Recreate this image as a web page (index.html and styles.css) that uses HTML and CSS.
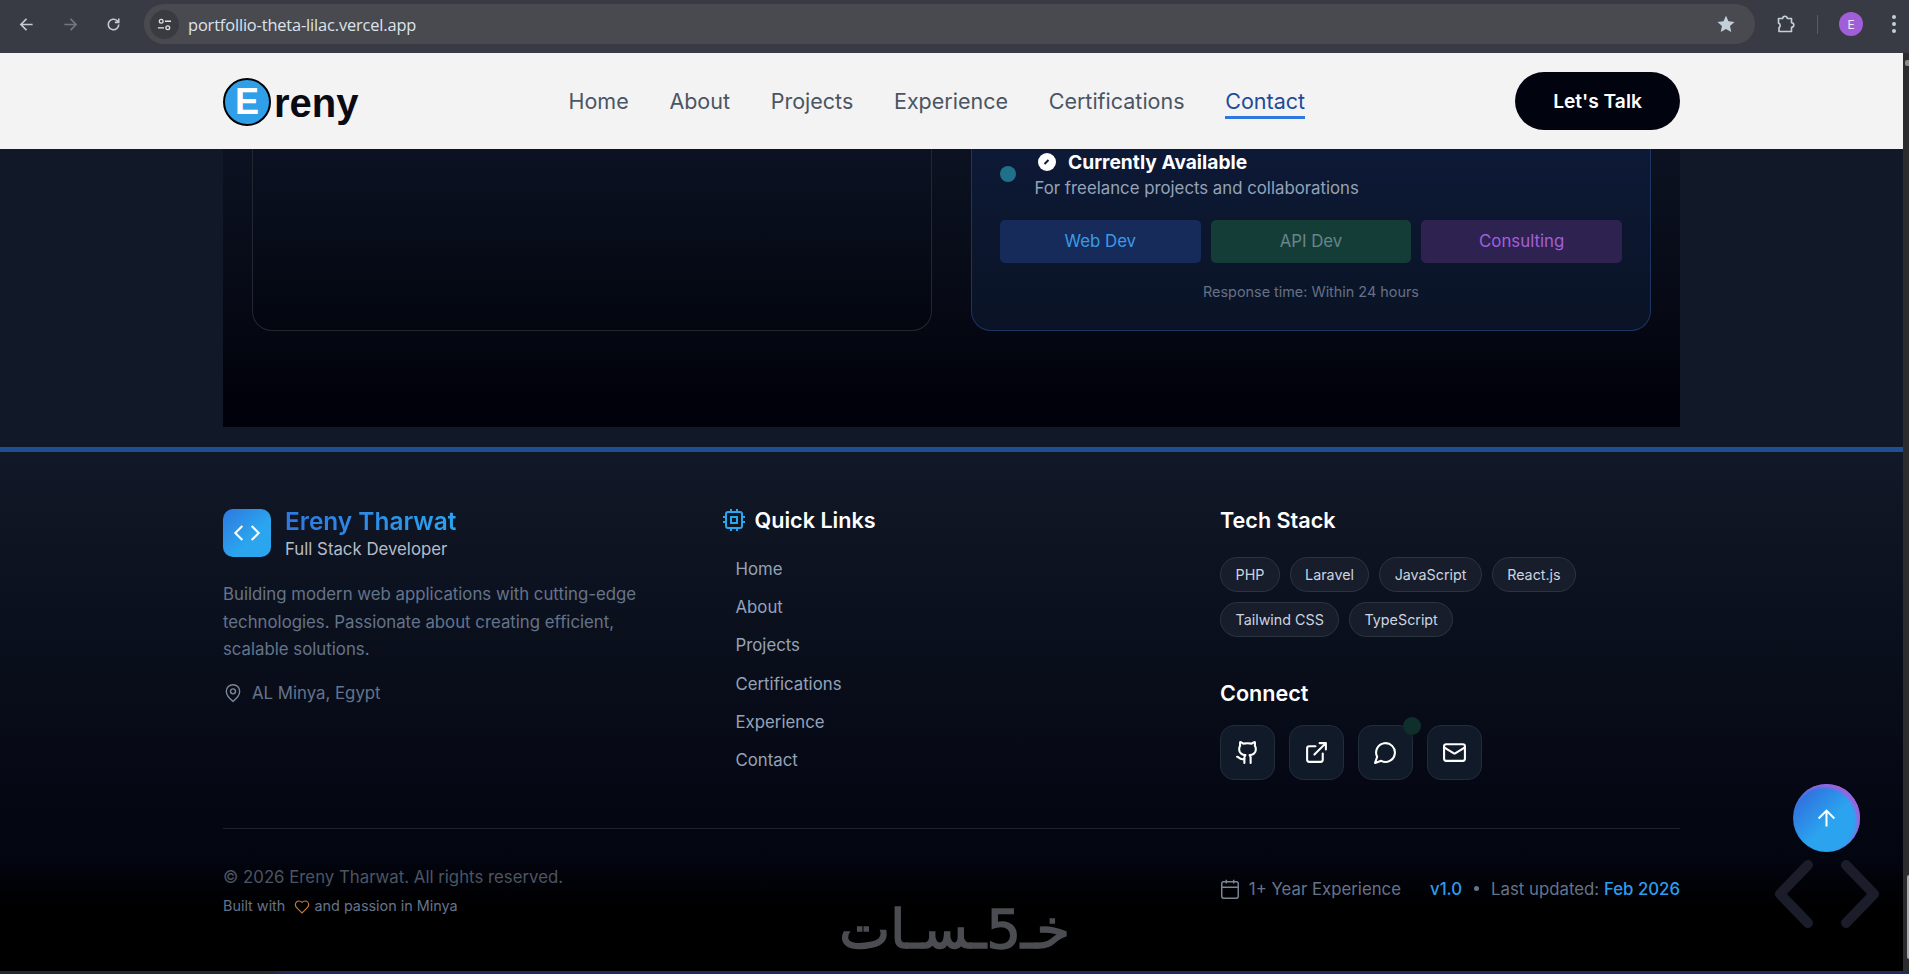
FILE: index.html
```html
<!DOCTYPE html>
<html lang="en">
<head>
<meta charset="utf-8">
<title>Ereny Tharwat</title>
<link rel="stylesheet" href="styles.css">
</head>
<body>
<div class="toolbar">
  <div class="tb-nav">
    <svg class="tb-ico" viewBox="0 0 16 16"><path d="M14.5 8H2M8 2 2 8l6 6"/></svg>
    <svg class="tb-ico dim" viewBox="0 0 16 16"><path d="M1.5 8H14M8 2l6 6-6 6"/></svg>
    <svg class="tb-ico" viewBox="0 0 16 16"><path d="M13.6 8a5.6 5.6 0 1 1-1.7-4L13.6 5.7M13.6 1.6v4.1H9.5"/></svg>
  </div>
  <div class="omnibox">
    <span class="tune"><svg viewBox="0 0 16 16"><circle cx="4.5" cy="4.5" r="2"/><path d="M8.5 4.5H15M1 11.5h6.5"/><circle cx="11.5" cy="11.5" r="2"/></svg></span>
    <span class="url">portfollio-theta-lilac.vercel.app</span>
    <svg class="star" viewBox="0 0 24 24"><path d="m12 2.2 3 6.6 7.2.8-5.4 4.8 1.5 7.1-6.3-3.6-6.3 3.6 1.5-7.1L1.8 9.6 9 8.8z"/></svg>
  </div>
  <div class="tb-right">
    <svg class="ext" viewBox="0 0 20 20"><path d="M2.5 4.5h4.2a2.3 2.3 0 0 1 4.6 0h4.2v4.2a2.3 2.3 0 0 1 0 4.6v4.2H3v-3.8a2.6 2.6 0 0 0 1.2-2.2c0-1-.6-1.9-1.7-2.4z"/></svg>
    <span class="sep"></span>
    <span class="avatar">E</span>
    <span class="dots"><i></i><i></i><i></i></span>
  </div>
</div>

<div class="viewport">
  <div class="main">
    <header class="header">
      <div class="wrap header-in">
        <a class="logo"><span class="logo-e">E</span><span class="logo-t">reny</span></a>
        <nav class="nav">
          <a>Home</a><a>About</a><a>Projects</a><a>Experience</a><a>Certifications</a><a class="active">Contact</a>
        </nav>
        <a class="talk">Let's Talk</a>
      </div>
    </header>

    <section class="wrap contact">
      <div class="card card-l"></div>
      <div class="card card-r">
        <div class="avail">
          <span class="pulse"></span>
          <div class="avail-text">
            <div class="avail-h">
              <svg class="check" viewBox="0 0 20 20"><circle cx="10" cy="10" r="9" class="check-bg"/><path d="m7.5 12 4-4" class="check-m"/></svg>
              <strong>Currently Available</strong>
            </div>
            <p>For freelance projects and collaborations</p>
          </div>
        </div>
        <div class="tags">
          <span class="tag t-blue">Web Dev</span>
          <span class="tag t-green">API Dev</span>
          <span class="tag t-purple">Consulting</span>
        </div>
        <p class="resp">Response time: Within 24 hours</p>
      </div>
    </section>

    <footer class="footer">
      <div class="wrap">
        <div class="f-grid">
          <div>
            <div class="brand">
              <span class="brand-ico"><svg viewBox="0 0 24 24"><path d="m8 6-6 6 6 6M16 6l6 6-6 6"/></svg></span>
              <div>
                <div class="brand-name">Ereny Tharwat</div>
                <div class="brand-sub">Full Stack Developer</div>
              </div>
            </div>
            <p class="about">Building modern web applications with cutting-edge technologies. Passionate about creating efficient, scalable solutions.</p>
            <div class="loc">
              <svg viewBox="0 0 24 24"><path d="M20 10c0 6-8 12-8 12s-8-6-8-12a8 8 0 0 1 16 0Z"/><circle cx="12" cy="10" r="3"/></svg>
              <span>AL Minya, Egypt</span>
            </div>
          </div>
          <div>
            <h3 class="f-h with-ico">
              <svg viewBox="0 0 24 24"><rect x="4" y="4" width="16" height="16" rx="2"/><rect x="9" y="9" width="6" height="6"/><path d="M9 1v3M15 1v3M9 20v3M15 20v3M20 9h3M20 14h3M1 9h3M1 14h3"/></svg>
              Quick Links
            </h3>
            <ul class="links">
              <li>Home</li><li>About</li><li>Projects</li><li>Certifications</li><li>Experience</li><li>Contact</li>
            </ul>
          </div>
          <div>
            <h3 class="f-h">Tech Stack</h3>
            <div class="pills">
              <span>PHP</span><span>Laravel</span><span>JavaScript</span><span>React.js</span><span>Tailwind CSS</span><span>TypeScript</span>
            </div>
            <h3 class="f-h connect">Connect</h3>
            <div class="socials">
              <a><svg viewBox="0 0 24 24"><path d="M15 22v-4a4.8 4.8 0 0 0-1-3.5c3 0 6-2 6-5.5.08-1.25-.27-2.48-1-3.5.28-1.15.28-2.35 0-3.5 0 0-1 0-3 1.5-2.64-.5-5.36-.5-8 0C6 2 5 2 5 2c-.3 1.15-.3 2.35 0 3.5A5.403 5.403 0 0 0 4 9c0 3.5 3 5.5 6 5.5-.39.49-.68 1.05-.85 1.65-.17.6-.22 1.23-.15 1.85v4"/><path d="M9 18c-4.51 2-5-2-7-2"/></svg></a>
              <a><svg viewBox="0 0 24 24"><path d="M18 13v6a2 2 0 0 1-2 2H5a2 2 0 0 1-2-2V8a2 2 0 0 1 2-2h6M15 3h6v6M10 14 21 3"/></svg></a>
              <a class="has-dot"><svg viewBox="0 0 24 24"><path d="M7.9 20A9 9 0 1 0 4 16.1L2 22Z"/></svg><span class="online"></span></a>
              <a><svg viewBox="0 0 24 24"><rect x="2" y="4" width="20" height="16" rx="2"/><path d="m22 7-8.97 5.7a1.94 1.94 0 0 1-2.06 0L2 7"/></svg></a>
            </div>
          </div>
        </div>
        <div class="f-bottom">
          <div>
            <p class="copy">© 2026 Ereny Tharwat. All rights reserved.</p>
            <p class="built">Built with <svg class="heart" viewBox="0 0 24 24"><path d="M19 14c1.49-1.46 3-3.21 3-5.5A5.5 5.5 0 0 0 16.5 3c-1.76 0-3 .5-4.5 2-1.5-1.5-2.74-2-4.5-2A5.5 5.5 0 0 0 2 8.5c0 2.3 1.5 4.05 3 5.5l7 7Z"/></svg> and passion in Minya</p>
          </div>
          <div class="meta">
            <svg viewBox="0 0 24 24"><path d="M8 2v4M16 2v4M3 10h18"/><rect x="3" y="4" width="18" height="18" rx="2"/></svg>
            <span class="exp">1+ Year Experience</span>
            <span class="ver">v1.0</span>
            <span class="bullet"></span>
            <span>Last updated: <b>Feb 2026</b></span>
          </div>
        </div>
      </div>
    </footer>
  </div>
  <div class="scrollbar"><span class="sb-arrow"></span><span class="sb-thumb"></span></div>

  <div class="watermark" dir="rtl" lang="ar">خـ5ـسـات</div>
  <svg class="code-mark" viewBox="0 0 104 68"><path d="M33 5 5 34l28 29M71 5l28 29-28 29"/></svg>
  <a class="to-top"><svg viewBox="0 0 24 24"><path d="M12 19V5M5 12l7-7 7 7"/></svg></a>
</div>
<div class="taskbar"></div>
</body>
</html>
```

FILE: styles.css
```css
* { box-sizing: border-box; }
html, body { margin: 0; padding: 0; }
body {
  width: 1909px;
  height: 974px;
  overflow: hidden;
  background: #111827;
  font-family: Inter, "Noto Sans", sans-serif;
  color: #fff;
}
p, h3, ul { margin: 0; padding: 0; }
ul { list-style: none; }

/* browser chrome */
.toolbar {
  height: 53px;
  background: #393b44;
  display: flex;
  align-items: center;
  padding: 0 0 5px 19px;
}
.tb-nav { display: flex; gap: 28.5px; width: 125px; }
.tb-ico { width: 15px; height: 15px; fill: none; stroke: #c4ccd3; stroke-width: 1.7; overflow: visible; flex: none; }
.tb-ico.dim { stroke: #717780; }
.omnibox {
  width: 1611px;
  height: 40px;
  border-radius: 20px;
  background: #494a50;
  display: flex;
  align-items: center;
  padding: 0 19px 0 6px;
}
.tune {
  width: 29px; height: 29px; border-radius: 50%;
  background: #393b41;
  display: flex; align-items: center; justify-content: center;
  flex: none;
}
.tune svg { width: 15px; height: 15px; fill: none; stroke: #dfe3e7; stroke-width: 1.4; }
.url { margin-left: 9px; font-family: "Open Sans", sans-serif; font-size: 16.4px; color: #dde3ea; flex: 1; letter-spacing: -0.15px; }
.star { width: 20px; height: 20px; fill: #c3d0da; }
.tb-right { display: flex; align-items: center; flex: 1; padding-left: 21px; }
.ext { width: 20px; height: 20px; fill: none; stroke: #c3d0da; stroke-width: 1.6; stroke-linejoin: round; }
.sep { width: 1px; height: 19px; background: #5a5c63; margin-left: 21px; }
.avatar {
  width: 24px; height: 24px; border-radius: 50%;
  background: #a05fd9; color: #f3e9fa;
  font-size: 12px; display: flex; align-items: center; justify-content: center;
  margin-left: 21px;
}
.dots { display: flex; flex-direction: column; gap: 3px; margin-left: 29px; }
.dots i { width: 4px; height: 4px; border-radius: 50%; background: #c3d0da; display: block; }

/* page */
.viewport { position: relative; display: flex; height: 918px; overflow: hidden; }
.main { width: 1903px; flex: none; }
.scrollbar { position: relative; flex: 1; background: #2c2c2f; }
.sb-arrow { position: absolute; top: 7px; left: 2px; width: 4px; height: 6px; background: #8a8a8d; border-radius: 2px 0 0 2px; }
.sb-thumb { position: absolute; top: 822px; left: 4px; width: 2px; height: 84px; background: #a8a8aa; border-radius: 2px 0 0 2px; }
.taskbar { height: 3px; background: linear-gradient(90deg, #232730 0, #232730 14%, #1c2d5c 15%, #1c2d5c 100%); }
.wrap { width: 1457px; margin: 0 auto; }

.header { height: 96px; background: #f3f3f3; }
.header-in { height: 100%; display: flex; align-items: center; justify-content: space-between; }
.logo { display: flex; align-items: center; color: #0a0a14; font-family: "Liberation Sans", sans-serif; font-weight: 700; margin-top: 1px; }
.logo-e {
  width: 48px; height: 48px; border-radius: 50%;
  border: 2px solid #000; background: #2e9fe8; color: #fff;
  display: flex; align-items: center; justify-content: center;
  font-size: 36px; line-height: 1;
}
.logo-t { font-size: 40px; line-height: 48px; margin-left: 3px; margin-top: 2px; }
.nav { display: flex; gap: 40.7px; font-size: 21.5px; color: #4b5563; }
.nav a { padding-bottom: 2px; border-bottom: 3px solid transparent; margin-top: 5px; line-height: 26px; }
.nav .active { color: #1e4a9c; border-bottom-color: #2f78e0; }
.talk {
  width: 165px; height: 58px; border-radius: 29px;
  background: #01030f; color: #fff;
  font-weight: 600; font-size: 19.2px;
  display: flex; align-items: center; justify-content: center;
}

.contact {
  display: grid;
  grid-template-columns: 680px 680px;
  column-gap: 39px;
  padding: 0 29px 96px;
  height: 278px;
  background: linear-gradient(180deg, #0c1222 0%, #060914 60%, #00010a 90%);
}
.card { border-radius: 0 0 20px 20px; }
.card-l { border: 1px solid #23272f; border-top: 0; background: linear-gradient(180deg, #0c1223, #03060f); }
.card-r {
  border: 1px solid #1c3563; border-top: 0;
  background: linear-gradient(180deg, #0d1936, #0a1325);
  padding: 0 28px;
}
.avail { display: flex; align-items: center; gap: 19px; height: 52px; }
.pulse { width: 16px; height: 16px; border-radius: 50%; background: #1f7088; flex: none; margin-top: -2px; }
.avail-h { display: flex; align-items: center; gap: 11px; margin-left: 2px; height: 26px; font-size: 19.2px; }
.avail-h strong { font-weight: 700; }
.check { width: 20px; height: 20px; flex: none; }
.check-bg { fill: #fff; }
.check-m { fill: none; stroke: #111a33; stroke-width: 2; }
.avail-text p { font-size: 16.8px; color: #94a3b8; line-height: 26px; margin-left: -0.5px; }
.tags { display: grid; grid-template-columns: repeat(3, 1fr); gap: 10px; margin-top: 19px; }
.tag { height: 43px; border-radius: 5px; display: flex; align-items: center; justify-content: center; font-size: 16.8px; padding-bottom: 2px; }
.t-blue { background: #172b5a; color: #3a9be8; }
.t-green { background: #143d38; color: #6a8489; }
.t-purple { background: #2e2350; color: #a25fdc; }
.resp { text-align: center; margin-top: 18px; font-size: 14.4px; line-height: 22px; color: #667085; }

/* footer */
.footer {
  margin-top: 20px;
  border-top: 5px solid #1f4f90;
  height: 524px;
  background: linear-gradient(180deg, #111827 0%, #030510 78%, #000 88%);
}
.f-grid {
  display: grid;
  grid-template-columns: 459px 459px 1fr;
  column-gap: 39.5px;
  height: 376px;
  padding-top: 57px;
}
.brand { display: flex; gap: 14px; align-items: center; height: 48px; }
.brand-ico {
  width: 48px; height: 48px; border-radius: 10px;
  background: linear-gradient(135deg, #2f78e0, #2aa5ee 60%);
  display: flex; align-items: center; justify-content: center; flex: none;
}
.brand-ico svg { width: 28px; height: 28px; fill: none; stroke: #fff; stroke-width: 1.8; }
.brand-name {
  font-size: 24.4px; font-weight: 600; line-height: 28px; margin-top: 1px;
  background: linear-gradient(90deg, #2f78e0, #2ba3ef);
  -webkit-background-clip: text; background-clip: text; color: transparent;
}
.brand-sub { font-size: 16.8px; line-height: 24px; color: #b4bcc8; margin-top: 2px; }
.about { margin-top: 24px; font-size: 16.8px; line-height: 27.5px; color: #64748b; }
.loc { display: flex; align-items: center; gap: 9px; margin-top: 15px; color: #64748b; font-size: 16.8px; line-height: 28px; }
.loc svg { width: 20px; height: 20px; fill: none; stroke: #7c8694; stroke-width: 1.7; flex: none; }
.f-h { font-size: 21.6px; font-weight: 600; line-height: 28px; margin-top: -3px; color: #fff; }
.with-ico { display: flex; align-items: center; gap: 9px; }
.with-ico svg { width: 24px; height: 24px; fill: none; stroke: #2aa5ee; stroke-width: 2; flex: none; }
.links { margin-top: 15.5px; padding-left: 14px; font-size: 16.8px; color: #94a3b8; }
.links li { height: 38.4px; line-height: 38.4px; }
.pills { display: flex; flex-wrap: wrap; gap: 10px 9.7px; margin-top: 23.4px; width: 400px; }
.pills span {
  height: 35px; padding: 0 14.5px; border-radius: 18px;
  background: #171d2a; border: 1px solid #2d3441;
  font-size: 14.3px; color: #cbd5e1;
  display: flex; align-items: center;
}
.connect { margin-top: 41.6px; }
.socials { display: flex; gap: 14px; margin-top: 18px; }
.socials a {
  position: relative;
  width: 55px; height: 55px; border-radius: 14px;
  background: #111a28; border: 1px solid #222c3a;
  display: flex; align-items: center; justify-content: center;
}
.socials svg { width: 25px; height: 25px; fill: none; stroke: #fff; stroke-width: 2; stroke-linecap: round; stroke-linejoin: round; }
.online { position: absolute; top: -9px; right: -9px; width: 18px; height: 18px; border-radius: 50%; background: #0e2f2b; }
.f-bottom {
  border-top: 1px solid #1c2230;
  display: flex; justify-content: space-between; align-items: center;
  padding-top: 35px;
}
.copy { font-size: 16.8px; line-height: 26px; color: #4b5563; }
.built { font-size: 14.4px; line-height: 22px; color: #64748b; margin-top: 5px; display: flex; align-items: center; white-space: pre; }
.heart { width: 16px; height: 16px; fill: none; stroke: #c47a3a; stroke-width: 1.8; margin: 2px 0 0 5px; }
.meta { display: flex; align-items: center; font-size: 16.8px; color: #64748b; margin-top: -4px; }
.meta svg { width: 22px; height: 22px; fill: none; stroke: #7c8694; stroke-width: 1.6; margin-right: 8px; }
.ver { color: #2d9cf0; margin-left: 29px; font-weight: 500; }
.bullet { width: 5px; height: 5px; border-radius: 50%; background: #64748b; margin: 0 12px; }
.meta b { color: #2d9cf0; font-weight: 500; }

/* overlays */
.watermark {
  position: absolute; left: 840px; top: 842px; width: 230px;
  font-family: "DejaVu Sans", sans-serif; font-size: 54px; line-height: 70px;
  -webkit-text-stroke: 1.5px #4b4d52;
  color: #4b4d52; white-space: nowrap; text-align: center;
}
.code-mark {
  position: absolute; left: 1775px; top: 807px; width: 104px; height: 68px;
  fill: none; stroke: #1b1e2a; stroke-width: 10; stroke-linecap: round; stroke-linejoin: round; overflow: visible;
}
.to-top {
  position: absolute; left: 1793px; top: 731px; width: 67px; height: 68px; border-radius: 50%;
  background: linear-gradient(135deg, #2f78e0 20%, #2ba3ef 55%);
  box-shadow: inset -3px 3px 3px #a25fdc;
  display: flex; align-items: center; justify-content: center;
}
.to-top svg { width: 27px; height: 27px; fill: none; stroke: #fff; stroke-width: 1.8; }
```
